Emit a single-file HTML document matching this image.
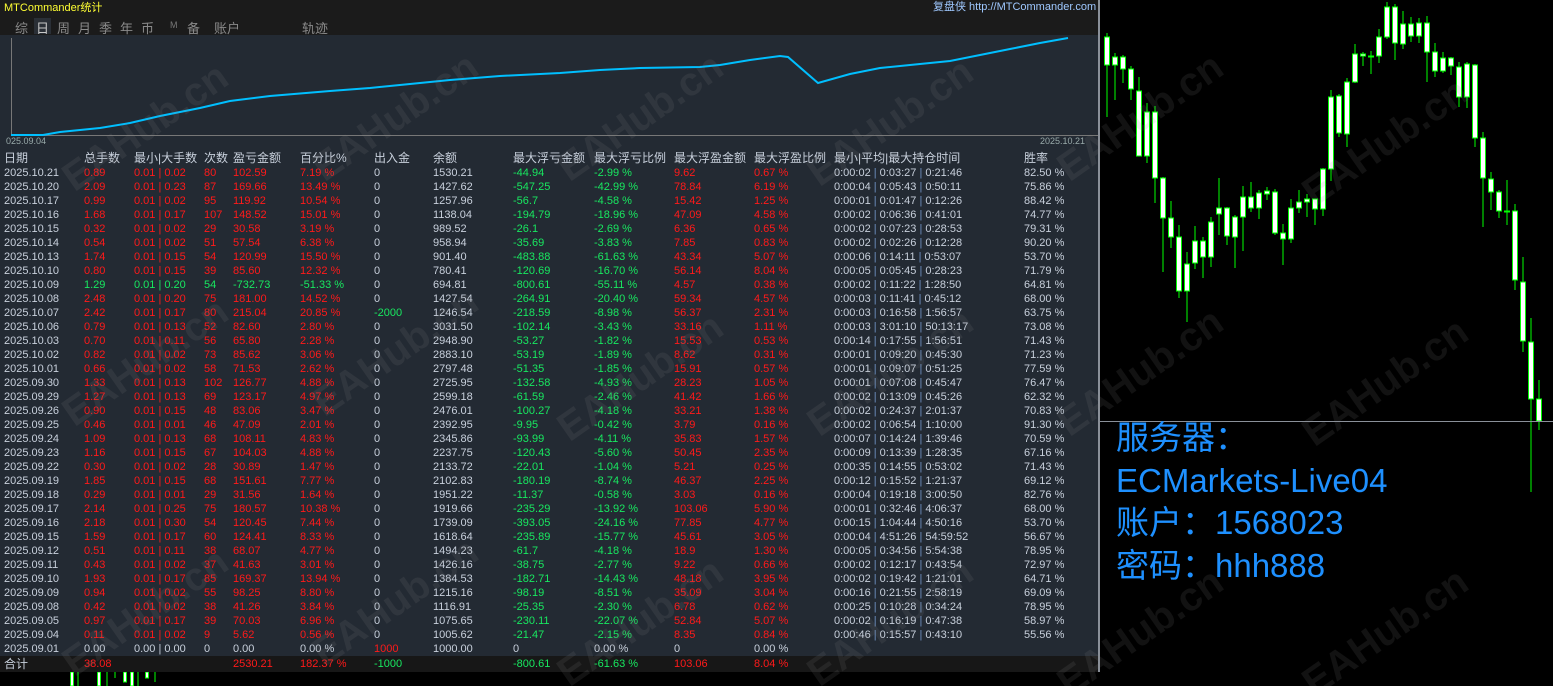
<!DOCTYPE html>
<html style="overflow:hidden;width:1553px;height:686px"><head><meta charset="utf-8"><style>
*{margin:0;padding:0}
body{width:1553px;height:686px;background:#000;position:relative;overflow:hidden;font-family:"Liberation Sans","Noto Sans CJK SC",sans-serif}
#top{position:absolute;left:0;top:0;width:1098px;height:35px;background:#1b1b1b}
#pan{position:absolute;left:0;top:35px;width:1098px;height:621px;background:#232a33}
#tot{position:absolute;left:0;top:656px;width:1098px;height:16px;background:#171717}
#vb{position:absolute;left:1098px;top:0;width:2px;height:672px;background:#8a9099}
.t{position:absolute;font-size:11px;color:#c8d0dc;white-space:nowrap}
.r{position:absolute;left:0;width:1098px;height:14px;font-size:11px;line-height:14px;white-space:nowrap;color:#c8d0dc}
.r span{position:absolute;top:0}
.a{left:4px}.b{left:84px;color:#ff1a1a}.c{left:134px;color:#ff1a1a}.d{left:204px;color:#ff1a1a}.e{left:233px;color:#ff1a1a}.f{left:300px;color:#ff1a1a}.h{left:374px}.i{left:433px}.j{left:513px;color:#18e860}.k{left:594px;color:#18e860}.l{left:674px;color:#ff1a1a}.m{left:754px;color:#ff1a1a}.n{left:834px}.o{left:1024px}
.r .gr{color:#18e860}.r .gy{color:#c8d0dc}
.n i{font-style:normal;color:#6d8fc0}
.wm{position:absolute;font:bold 40px "Liberation Sans",sans-serif;color:rgba(140,140,140,0.13);transform:rotate(-35deg);white-space:nowrap}
#wms{position:absolute;left:0;top:0;width:1553px;height:686px;overflow:hidden}
.bl{position:absolute;left:1116px;font-size:33px;color:#1e90ff;white-space:nowrap;line-height:38px}
</style></head><body>
<div id="top"></div><div id="pan"></div><div id="tot"></div>
<div class="t" style="left:4px;top:-1px;color:#ffff33;font-size:11px">MTCommander统计</div>
<div class="t" style="left:933px;top:-2px;color:#9fc8ff;font-size:11px">复盘侠 http://MTCommander.com</div>
<div style="position:absolute;left:34px;top:18px;width:17px;height:16px;background:#2a2f36"></div>
<div class="t" style="top:18px;font-size:13px;color:#8a8a8a;left:15px">综</div>
<div class="t" style="top:18px;font-size:13px;color:#c8c8c8;left:36px">日</div>
<div class="t" style="top:18px;font-size:13px;color:#8a8a8a;left:57px">周</div>
<div class="t" style="top:18px;font-size:13px;color:#8a8a8a;left:78px">月</div>
<div class="t" style="top:18px;font-size:13px;color:#8a8a8a;left:99px">季</div>
<div class="t" style="top:18px;font-size:13px;color:#8a8a8a;left:120px">年</div>
<div class="t" style="top:18px;font-size:13px;color:#8a8a8a;left:141px">币</div>
<div class="t" style="top:20px;font-size:9px;color:#777;left:170px">M</div>
<div class="t" style="top:18px;font-size:13px;color:#8a8a8a;left:187px">备</div>
<div class="t" style="top:18px;font-size:13px;color:#8a8a8a;left:214px">账户</div>
<div class="t" style="top:18px;font-size:13px;color:#8a8a8a;left:302px">轨迹</div>
<svg style="position:absolute;left:0;top:0" width="1100" height="150">
<line x1="11.5" y1="38" x2="11.5" y2="136" stroke="#777" stroke-width="1"/>
<line x1="11" y1="135.5" x2="1098" y2="135.5" stroke="#777" stroke-width="1"/>
<polyline fill="none" stroke="#00bfff" stroke-width="2" points="11,135 43,135 60,132 100,128 130,123 160,116 200,108 230,101 270,96 330,91 370,88 410,84 450,80 500,76 560,73 600,70 640,68 700,67 720,65 750,60 780,56 788,57 818,83 850,74 880,68 920,64 950,61 980,55 1010,49 1040,43 1068,38"/>
</svg>
<div class="t" style="left:6px;top:136px;font-size:9px;color:#9aa">025.09.04</div>
<div class="t" style="left:1040px;top:136px;font-size:9px;color:#9aa">2025.10.21</div>

<div class="r" style="top:151px;font-size:12px"><span class="a">日期</span><span class="b gy">总手数</span><span class="c gy">最小|大手数</span><span class="d gy">次数</span><span class="e gy">盈亏金额</span><span class="f gy">百分比%</span><span class="h">出入金</span><span class="i">余额</span><span class="j gy">最大浮亏金额</span><span class="k gy">最大浮亏比例</span><span class="l gy">最大浮盈金额</span><span class="m gy">最大浮盈比例</span><span class="n">最小|平均|最大持仓时间</span><span class="o">胜率</span></div>

<div class="r" style="top:166px"><span class="a">2025.10.21</span><span class="b">0.89</span><span class="c">0.01 | 0.02</span><span class="d">80</span><span class="e">102.59</span><span class="f">7.19 %</span><span class="h">0</span><span class="i">1530.21</span><span class="j">-44.94</span><span class="k">-2.99 %</span><span class="l">9.62</span><span class="m">0.67 %</span><span class="n">0:00:02 <i>|</i> 0:03:27 <i>|</i> 0:21:46</span><span class="o">82.50 %</span></div>
<div class="r" style="top:180px"><span class="a">2025.10.20</span><span class="b">2.09</span><span class="c">0.01 | 0.23</span><span class="d">87</span><span class="e">169.66</span><span class="f">13.49 %</span><span class="h">0</span><span class="i">1427.62</span><span class="j">-547.25</span><span class="k">-42.99 %</span><span class="l">78.84</span><span class="m">6.19 %</span><span class="n">0:00:04 <i>|</i> 0:05:43 <i>|</i> 0:50:11</span><span class="o">75.86 %</span></div>
<div class="r" style="top:194px"><span class="a">2025.10.17</span><span class="b">0.99</span><span class="c">0.01 | 0.02</span><span class="d">95</span><span class="e">119.92</span><span class="f">10.54 %</span><span class="h">0</span><span class="i">1257.96</span><span class="j">-56.7</span><span class="k">-4.58 %</span><span class="l">15.42</span><span class="m">1.25 %</span><span class="n">0:00:01 <i>|</i> 0:01:47 <i>|</i> 0:12:26</span><span class="o">88.42 %</span></div>
<div class="r" style="top:208px"><span class="a">2025.10.16</span><span class="b">1.68</span><span class="c">0.01 | 0.17</span><span class="d">107</span><span class="e">148.52</span><span class="f">15.01 %</span><span class="h">0</span><span class="i">1138.04</span><span class="j">-194.79</span><span class="k">-18.96 %</span><span class="l">47.09</span><span class="m">4.58 %</span><span class="n">0:00:02 <i>|</i> 0:06:36 <i>|</i> 0:41:01</span><span class="o">74.77 %</span></div>
<div class="r" style="top:222px"><span class="a">2025.10.15</span><span class="b">0.32</span><span class="c">0.01 | 0.02</span><span class="d">29</span><span class="e">30.58</span><span class="f">3.19 %</span><span class="h">0</span><span class="i">989.52</span><span class="j">-26.1</span><span class="k">-2.69 %</span><span class="l">6.36</span><span class="m">0.65 %</span><span class="n">0:00:02 <i>|</i> 0:07:23 <i>|</i> 0:28:53</span><span class="o">79.31 %</span></div>
<div class="r" style="top:236px"><span class="a">2025.10.14</span><span class="b">0.54</span><span class="c">0.01 | 0.02</span><span class="d">51</span><span class="e">57.54</span><span class="f">6.38 %</span><span class="h">0</span><span class="i">958.94</span><span class="j">-35.69</span><span class="k">-3.83 %</span><span class="l">7.85</span><span class="m">0.83 %</span><span class="n">0:00:02 <i>|</i> 0:02:26 <i>|</i> 0:12:28</span><span class="o">90.20 %</span></div>
<div class="r" style="top:250px"><span class="a">2025.10.13</span><span class="b">1.74</span><span class="c">0.01 | 0.15</span><span class="d">54</span><span class="e">120.99</span><span class="f">15.50 %</span><span class="h">0</span><span class="i">901.40</span><span class="j">-483.88</span><span class="k">-61.63 %</span><span class="l">43.34</span><span class="m">5.07 %</span><span class="n">0:00:06 <i>|</i> 0:14:11 <i>|</i> 0:53:07</span><span class="o">53.70 %</span></div>
<div class="r" style="top:264px"><span class="a">2025.10.10</span><span class="b">0.80</span><span class="c">0.01 | 0.15</span><span class="d">39</span><span class="e">85.60</span><span class="f">12.32 %</span><span class="h">0</span><span class="i">780.41</span><span class="j">-120.69</span><span class="k">-16.70 %</span><span class="l">56.14</span><span class="m">8.04 %</span><span class="n">0:00:05 <i>|</i> 0:05:45 <i>|</i> 0:28:23</span><span class="o">71.79 %</span></div>
<div class="r" style="top:278px"><span class="a">2025.10.09</span><span class="b gr">1.29</span><span class="c gr">0.01 | 0.20</span><span class="d gr">54</span><span class="e gr">-732.73</span><span class="f gr">-51.33 %</span><span class="h">0</span><span class="i">694.81</span><span class="j">-800.61</span><span class="k">-55.11 %</span><span class="l">4.57</span><span class="m">0.38 %</span><span class="n">0:00:02 <i>|</i> 0:11:22 <i>|</i> 1:28:50</span><span class="o">64.81 %</span></div>
<div class="r" style="top:292px"><span class="a">2025.10.08</span><span class="b">2.48</span><span class="c">0.01 | 0.20</span><span class="d">75</span><span class="e">181.00</span><span class="f">14.52 %</span><span class="h">0</span><span class="i">1427.54</span><span class="j">-264.91</span><span class="k">-20.40 %</span><span class="l">59.34</span><span class="m">4.57 %</span><span class="n">0:00:03 <i>|</i> 0:11:41 <i>|</i> 0:45:12</span><span class="o">68.00 %</span></div>
<div class="r" style="top:306px"><span class="a">2025.10.07</span><span class="b">2.42</span><span class="c">0.01 | 0.17</span><span class="d">80</span><span class="e">215.04</span><span class="f">20.85 %</span><span class="h gr">-2000</span><span class="i">1246.54</span><span class="j">-218.59</span><span class="k">-8.98 %</span><span class="l">56.37</span><span class="m">2.31 %</span><span class="n">0:00:03 <i>|</i> 0:16:58 <i>|</i> 1:56:57</span><span class="o">63.75 %</span></div>
<div class="r" style="top:320px"><span class="a">2025.10.06</span><span class="b">0.79</span><span class="c">0.01 | 0.13</span><span class="d">52</span><span class="e">82.60</span><span class="f">2.80 %</span><span class="h">0</span><span class="i">3031.50</span><span class="j">-102.14</span><span class="k">-3.43 %</span><span class="l">33.16</span><span class="m">1.11 %</span><span class="n">0:00:03 <i>|</i> 3:01:10 <i>|</i> 50:13:17</span><span class="o">73.08 %</span></div>
<div class="r" style="top:334px"><span class="a">2025.10.03</span><span class="b">0.70</span><span class="c">0.01 | 0.11</span><span class="d">56</span><span class="e">65.80</span><span class="f">2.28 %</span><span class="h">0</span><span class="i">2948.90</span><span class="j">-53.27</span><span class="k">-1.82 %</span><span class="l">15.53</span><span class="m">0.53 %</span><span class="n">0:00:14 <i>|</i> 0:17:55 <i>|</i> 1:56:51</span><span class="o">71.43 %</span></div>
<div class="r" style="top:348px"><span class="a">2025.10.02</span><span class="b">0.82</span><span class="c">0.01 | 0.02</span><span class="d">73</span><span class="e">85.62</span><span class="f">3.06 %</span><span class="h">0</span><span class="i">2883.10</span><span class="j">-53.19</span><span class="k">-1.89 %</span><span class="l">8.62</span><span class="m">0.31 %</span><span class="n">0:00:01 <i>|</i> 0:09:20 <i>|</i> 0:45:30</span><span class="o">71.23 %</span></div>
<div class="r" style="top:362px"><span class="a">2025.10.01</span><span class="b">0.66</span><span class="c">0.01 | 0.02</span><span class="d">58</span><span class="e">71.53</span><span class="f">2.62 %</span><span class="h">0</span><span class="i">2797.48</span><span class="j">-51.35</span><span class="k">-1.85 %</span><span class="l">15.91</span><span class="m">0.57 %</span><span class="n">0:00:01 <i>|</i> 0:09:07 <i>|</i> 0:51:25</span><span class="o">77.59 %</span></div>
<div class="r" style="top:376px"><span class="a">2025.09.30</span><span class="b">1.33</span><span class="c">0.01 | 0.13</span><span class="d">102</span><span class="e">126.77</span><span class="f">4.88 %</span><span class="h">0</span><span class="i">2725.95</span><span class="j">-132.58</span><span class="k">-4.93 %</span><span class="l">28.23</span><span class="m">1.05 %</span><span class="n">0:00:01 <i>|</i> 0:07:08 <i>|</i> 0:45:47</span><span class="o">76.47 %</span></div>
<div class="r" style="top:390px"><span class="a">2025.09.29</span><span class="b">1.27</span><span class="c">0.01 | 0.13</span><span class="d">69</span><span class="e">123.17</span><span class="f">4.97 %</span><span class="h">0</span><span class="i">2599.18</span><span class="j">-61.59</span><span class="k">-2.46 %</span><span class="l">41.42</span><span class="m">1.66 %</span><span class="n">0:00:02 <i>|</i> 0:13:09 <i>|</i> 0:45:26</span><span class="o">62.32 %</span></div>
<div class="r" style="top:404px"><span class="a">2025.09.26</span><span class="b">0.90</span><span class="c">0.01 | 0.15</span><span class="d">48</span><span class="e">83.06</span><span class="f">3.47 %</span><span class="h">0</span><span class="i">2476.01</span><span class="j">-100.27</span><span class="k">-4.18 %</span><span class="l">33.21</span><span class="m">1.38 %</span><span class="n">0:00:02 <i>|</i> 0:24:37 <i>|</i> 2:01:37</span><span class="o">70.83 %</span></div>
<div class="r" style="top:418px"><span class="a">2025.09.25</span><span class="b">0.46</span><span class="c">0.01 | 0.01</span><span class="d">46</span><span class="e">47.09</span><span class="f">2.01 %</span><span class="h">0</span><span class="i">2392.95</span><span class="j">-9.95</span><span class="k">-0.42 %</span><span class="l">3.79</span><span class="m">0.16 %</span><span class="n">0:00:02 <i>|</i> 0:06:54 <i>|</i> 1:10:00</span><span class="o">91.30 %</span></div>
<div class="r" style="top:432px"><span class="a">2025.09.24</span><span class="b">1.09</span><span class="c">0.01 | 0.13</span><span class="d">68</span><span class="e">108.11</span><span class="f">4.83 %</span><span class="h">0</span><span class="i">2345.86</span><span class="j">-93.99</span><span class="k">-4.11 %</span><span class="l">35.83</span><span class="m">1.57 %</span><span class="n">0:00:07 <i>|</i> 0:14:24 <i>|</i> 1:39:46</span><span class="o">70.59 %</span></div>
<div class="r" style="top:446px"><span class="a">2025.09.23</span><span class="b">1.16</span><span class="c">0.01 | 0.15</span><span class="d">67</span><span class="e">104.03</span><span class="f">4.88 %</span><span class="h">0</span><span class="i">2237.75</span><span class="j">-120.43</span><span class="k">-5.60 %</span><span class="l">50.45</span><span class="m">2.35 %</span><span class="n">0:00:09 <i>|</i> 0:13:39 <i>|</i> 1:28:35</span><span class="o">67.16 %</span></div>
<div class="r" style="top:460px"><span class="a">2025.09.22</span><span class="b">0.30</span><span class="c">0.01 | 0.02</span><span class="d">28</span><span class="e">30.89</span><span class="f">1.47 %</span><span class="h">0</span><span class="i">2133.72</span><span class="j">-22.01</span><span class="k">-1.04 %</span><span class="l">5.21</span><span class="m">0.25 %</span><span class="n">0:00:35 <i>|</i> 0:14:55 <i>|</i> 0:53:02</span><span class="o">71.43 %</span></div>
<div class="r" style="top:474px"><span class="a">2025.09.19</span><span class="b">1.85</span><span class="c">0.01 | 0.15</span><span class="d">68</span><span class="e">151.61</span><span class="f">7.77 %</span><span class="h">0</span><span class="i">2102.83</span><span class="j">-180.19</span><span class="k">-8.74 %</span><span class="l">46.37</span><span class="m">2.25 %</span><span class="n">0:00:12 <i>|</i> 0:15:52 <i>|</i> 1:21:37</span><span class="o">69.12 %</span></div>
<div class="r" style="top:488px"><span class="a">2025.09.18</span><span class="b">0.29</span><span class="c">0.01 | 0.01</span><span class="d">29</span><span class="e">31.56</span><span class="f">1.64 %</span><span class="h">0</span><span class="i">1951.22</span><span class="j">-11.37</span><span class="k">-0.58 %</span><span class="l">3.03</span><span class="m">0.16 %</span><span class="n">0:00:04 <i>|</i> 0:19:18 <i>|</i> 3:00:50</span><span class="o">82.76 %</span></div>
<div class="r" style="top:502px"><span class="a">2025.09.17</span><span class="b">2.14</span><span class="c">0.01 | 0.25</span><span class="d">75</span><span class="e">180.57</span><span class="f">10.38 %</span><span class="h">0</span><span class="i">1919.66</span><span class="j">-235.29</span><span class="k">-13.92 %</span><span class="l">103.06</span><span class="m">5.90 %</span><span class="n">0:00:01 <i>|</i> 0:32:46 <i>|</i> 4:06:37</span><span class="o">68.00 %</span></div>
<div class="r" style="top:516px"><span class="a">2025.09.16</span><span class="b">2.18</span><span class="c">0.01 | 0.30</span><span class="d">54</span><span class="e">120.45</span><span class="f">7.44 %</span><span class="h">0</span><span class="i">1739.09</span><span class="j">-393.05</span><span class="k">-24.16 %</span><span class="l">77.85</span><span class="m">4.77 %</span><span class="n">0:00:15 <i>|</i> 1:04:44 <i>|</i> 4:50:16</span><span class="o">53.70 %</span></div>
<div class="r" style="top:530px"><span class="a">2025.09.15</span><span class="b">1.59</span><span class="c">0.01 | 0.17</span><span class="d">60</span><span class="e">124.41</span><span class="f">8.33 %</span><span class="h">0</span><span class="i">1618.64</span><span class="j">-235.89</span><span class="k">-15.77 %</span><span class="l">45.61</span><span class="m">3.05 %</span><span class="n">0:00:04 <i>|</i> 4:51:26 <i>|</i> 54:59:52</span><span class="o">56.67 %</span></div>
<div class="r" style="top:544px"><span class="a">2025.09.12</span><span class="b">0.51</span><span class="c">0.01 | 0.11</span><span class="d">38</span><span class="e">68.07</span><span class="f">4.77 %</span><span class="h">0</span><span class="i">1494.23</span><span class="j">-61.7</span><span class="k">-4.18 %</span><span class="l">18.9</span><span class="m">1.30 %</span><span class="n">0:00:05 <i>|</i> 0:34:56 <i>|</i> 5:54:38</span><span class="o">78.95 %</span></div>
<div class="r" style="top:558px"><span class="a">2025.09.11</span><span class="b">0.43</span><span class="c">0.01 | 0.02</span><span class="d">37</span><span class="e">41.63</span><span class="f">3.01 %</span><span class="h">0</span><span class="i">1426.16</span><span class="j">-38.75</span><span class="k">-2.77 %</span><span class="l">9.22</span><span class="m">0.66 %</span><span class="n">0:00:02 <i>|</i> 0:12:17 <i>|</i> 0:43:54</span><span class="o">72.97 %</span></div>
<div class="r" style="top:572px"><span class="a">2025.09.10</span><span class="b">1.93</span><span class="c">0.01 | 0.17</span><span class="d">85</span><span class="e">169.37</span><span class="f">13.94 %</span><span class="h">0</span><span class="i">1384.53</span><span class="j">-182.71</span><span class="k">-14.43 %</span><span class="l">48.18</span><span class="m">3.95 %</span><span class="n">0:00:02 <i>|</i> 0:19:42 <i>|</i> 1:21:01</span><span class="o">64.71 %</span></div>
<div class="r" style="top:586px"><span class="a">2025.09.09</span><span class="b">0.94</span><span class="c">0.01 | 0.02</span><span class="d">55</span><span class="e">98.25</span><span class="f">8.80 %</span><span class="h">0</span><span class="i">1215.16</span><span class="j">-98.19</span><span class="k">-8.51 %</span><span class="l">35.09</span><span class="m">3.04 %</span><span class="n">0:00:16 <i>|</i> 0:21:55 <i>|</i> 2:58:19</span><span class="o">69.09 %</span></div>
<div class="r" style="top:600px"><span class="a">2025.09.08</span><span class="b">0.42</span><span class="c">0.01 | 0.02</span><span class="d">38</span><span class="e">41.26</span><span class="f">3.84 %</span><span class="h">0</span><span class="i">1116.91</span><span class="j">-25.35</span><span class="k">-2.30 %</span><span class="l">6.78</span><span class="m">0.62 %</span><span class="n">0:00:25 <i>|</i> 0:10:28 <i>|</i> 0:34:24</span><span class="o">78.95 %</span></div>
<div class="r" style="top:614px"><span class="a">2025.09.05</span><span class="b">0.97</span><span class="c">0.01 | 0.17</span><span class="d">39</span><span class="e">70.03</span><span class="f">6.96 %</span><span class="h">0</span><span class="i">1075.65</span><span class="j">-230.11</span><span class="k">-22.07 %</span><span class="l">52.84</span><span class="m">5.07 %</span><span class="n">0:00:02 <i>|</i> 0:16:19 <i>|</i> 0:47:38</span><span class="o">58.97 %</span></div>
<div class="r" style="top:628px"><span class="a">2025.09.04</span><span class="b">0.11</span><span class="c">0.01 | 0.02</span><span class="d">9</span><span class="e">5.62</span><span class="f">0.56 %</span><span class="h">0</span><span class="i">1005.62</span><span class="j">-21.47</span><span class="k">-2.15 %</span><span class="l">8.35</span><span class="m">0.84 %</span><span class="n">0:00:46 <i>|</i> 0:15:57 <i>|</i> 0:43:10</span><span class="o">55.56 %</span></div>
<div class="r" style="top:642px"><span class="a">2025.09.01</span><span class="b gy">0.00</span><span class="c gy">0.00 | 0.00</span><span class="d gy">0</span><span class="e gy">0.00</span><span class="f gy">0.00 %</span><span class="h" style="color:#ff1a1a">1000</span><span class="i">1000.00</span><span class="j gy">0</span><span class="k gy">0.00 %</span><span class="l gy">0</span><span class="m gy">0.00 %</span></div>
<div class="r" style="top:657px"><span class="a" style="font-size:12px">合计</span><span class="b">38.08</span><span class="e">2530.21</span><span class="f">182.37 %</span><span class="h gr">-1000</span><span class="j">-800.61</span><span class="k">-61.63 %</span><span class="l">103.06</span><span class="m">8.04 %</span></div>

<div id="vb"></div>
<svg style="position:absolute;left:1100px;top:0" width="453" height="686">
<g stroke="#00ff00" stroke-width="1" fill="#fff">
<line x1="7" y1="33" x2="7" y2="117"/><rect x="4.5" y="37" width="5" height="28"/>
<line x1="15" y1="53" x2="15" y2="100"/><rect x="12.5" y="57" width="5" height="8"/>
<line x1="23" y1="55" x2="23" y2="83"/><rect x="20.5" y="57" width="5" height="12"/>
<line x1="31" y1="66" x2="31" y2="100"/><rect x="28.5" y="69" width="5" height="20"/>
<line x1="39" y1="77" x2="39" y2="156"/><rect x="36.5" y="91" width="5" height="65"/>
<line x1="47" y1="103" x2="47" y2="163"/><rect x="44.5" y="112" width="5" height="44"/>
<line x1="55" y1="106" x2="55" y2="203"/><rect x="52.5" y="112" width="5" height="66"/>
<line x1="63" y1="177" x2="63" y2="272"/><rect x="60.5" y="178" width="5" height="40"/>
<line x1="71" y1="201" x2="71" y2="248"/><rect x="68.5" y="218" width="5" height="19"/>
<line x1="79" y1="225" x2="79" y2="298"/><rect x="76.5" y="237" width="5" height="54"/>
<line x1="87" y1="252" x2="87" y2="322"/><rect x="84.5" y="264" width="5" height="27"/>
<line x1="95" y1="226" x2="95" y2="269"/><rect x="92.5" y="241" width="5" height="22"/>
<line x1="103" y1="237" x2="103" y2="278"/><rect x="100.5" y="241" width="5" height="16"/>
<line x1="111" y1="217" x2="111" y2="267"/><rect x="108.5" y="222" width="5" height="35"/>
<line x1="119" y1="178" x2="119" y2="235"/><rect x="116.5" y="208" width="5" height="6"/>
<line x1="127" y1="207" x2="127" y2="245"/><rect x="124.5" y="208" width="5" height="28"/>
<line x1="135" y1="215" x2="135" y2="268"/><rect x="132.5" y="217" width="5" height="20"/>
<line x1="143" y1="186" x2="143" y2="251"/><rect x="140.5" y="197" width="5" height="20"/>
<line x1="151" y1="182" x2="151" y2="212"/><rect x="148.5" y="197" width="5" height="11"/>
<line x1="159" y1="190" x2="159" y2="219"/><rect x="156.5" y="193" width="5" height="15"/>
<line x1="167" y1="187" x2="167" y2="200"/><rect x="164.5" y="191" width="5" height="3"/>
<line x1="175" y1="189" x2="175" y2="235"/><rect x="172.5" y="192" width="5" height="41"/>
<line x1="183" y1="224" x2="183" y2="265"/><rect x="180.5" y="233" width="5" height="6"/>
<line x1="191" y1="199" x2="191" y2="243"/><rect x="188.5" y="208" width="5" height="31"/>
<line x1="199" y1="190" x2="199" y2="213"/><rect x="196.5" y="202" width="5" height="6"/>
<line x1="207" y1="194" x2="207" y2="217"/><rect x="204.5" y="199" width="5" height="3"/>
<line x1="215" y1="199" x2="215" y2="225"/><rect x="212.5" y="199" width="5" height="10"/>
<line x1="223" y1="168" x2="223" y2="216"/><rect x="220.5" y="169" width="5" height="40"/>
<line x1="231" y1="90" x2="231" y2="181"/><rect x="228.5" y="97" width="5" height="72"/>
<line x1="239" y1="94" x2="239" y2="137"/><rect x="236.5" y="96" width="5" height="37"/>
<line x1="247" y1="78" x2="247" y2="147"/><rect x="244.5" y="82" width="5" height="52"/>
<line x1="255" y1="44" x2="255" y2="83"/><rect x="252.5" y="54" width="5" height="28"/>
<line x1="263" y1="52" x2="263" y2="66"/><rect x="260.5" y="54" width="5" height="2"/>
<line x1="271" y1="51" x2="271" y2="74"/><rect x="268.5" y="56" width="5" height="1"/>
<line x1="279" y1="29" x2="279" y2="63"/><rect x="276.5" y="37" width="5" height="19"/>
<line x1="287" y1="2" x2="287" y2="39"/><rect x="284.5" y="7" width="5" height="30"/>
<line x1="295" y1="4" x2="295" y2="60"/><rect x="292.5" y="7" width="5" height="36"/>
<line x1="303" y1="11" x2="303" y2="49"/><rect x="300.5" y="24" width="5" height="20"/>
<line x1="311" y1="17" x2="311" y2="42"/><rect x="308.5" y="24" width="5" height="12"/>
<line x1="319" y1="18" x2="319" y2="43"/><rect x="316.5" y="23" width="5" height="13"/>
<line x1="327" y1="16" x2="327" y2="82"/><rect x="324.5" y="23" width="5" height="29"/>
<line x1="335" y1="43" x2="335" y2="77"/><rect x="332.5" y="52" width="5" height="19"/>
<line x1="343" y1="52" x2="343" y2="73"/><rect x="340.5" y="58" width="5" height="13"/>
<line x1="351" y1="57" x2="351" y2="75"/><rect x="348.5" y="58" width="5" height="8"/>
<line x1="359" y1="62" x2="359" y2="107"/><rect x="356.5" y="67" width="5" height="30"/>
<line x1="367" y1="62" x2="367" y2="108"/><rect x="364.5" y="64" width="5" height="33"/>
<line x1="375" y1="64" x2="375" y2="147"/><rect x="372.5" y="65" width="5" height="73"/>
<line x1="383" y1="132" x2="383" y2="227"/><rect x="380.5" y="138" width="5" height="40"/>
<line x1="391" y1="172" x2="391" y2="210"/><rect x="388.5" y="179" width="5" height="13"/>
<line x1="399" y1="190" x2="399" y2="218"/><rect x="396.5" y="192" width="5" height="19"/>
<line x1="407" y1="180" x2="407" y2="225"/><rect x="404.5" y="211" width="5" height="1"/>
<line x1="415" y1="204" x2="415" y2="290"/><rect x="412.5" y="211" width="5" height="69"/>
<line x1="423" y1="257" x2="423" y2="352"/><rect x="420.5" y="282" width="5" height="59"/>
<line x1="431" y1="318" x2="431" y2="492"/><rect x="428.5" y="342" width="5" height="57"/>
<line x1="439" y1="380" x2="439" y2="430"/><rect x="436.5" y="399" width="5" height="22"/>
</g>
<line x1="0" y1="421.5" x2="453" y2="421.5" stroke="#8a9099" stroke-width="1"/>
</svg>
<svg style="position:absolute;left:60px;top:672px" width="140" height="14"><g stroke="#00ff00" fill="#fff"><rect x="10.5" y="0" width="3" height="14"/><line x1="18" y1="0" x2="18" y2="14"/><rect x="37.5" y="0" width="3" height="14"/><line x1="47" y1="0" x2="47" y2="14"/><line x1="55" y1="0" x2="55" y2="6"/><rect x="63.5" y="0" width="3" height="10"/><rect x="70.5" y="0" width="3" height="14"/><line x1="78" y1="0" x2="78" y2="14"/><rect x="85.5" y="0" width="3" height="6"/><line x1="95" y1="0" x2="95" y2="10"/></g></svg>

<div class="bl" style="top:419px">服务器：</div>
<div class="bl" style="top:462px">ECMarkets-Live04</div>
<div class="bl" style="top:504px">账户：1568023</div>
<div class="bl" style="top:547px">密码：hhh888</div>

<div id="wms">
<div class="wm" style="left:50px;top:105px">EAHub.cn</div>
<div class="wm" style="left:300px;top:95px">EAHub.cn</div>
<div class="wm" style="left:545px;top:95px">EAHub.cn</div>
<div class="wm" style="left:795px;top:100px">EAHub.cn</div>
<div class="wm" style="left:1045px;top:95px">EAHub.cn</div>
<div class="wm" style="left:1290px;top:120px">EAHub.cn</div>
<div class="wm" style="left:50px;top:340px">EAHub.cn</div>
<div class="wm" style="left:300px;top:330px">EAHub.cn</div>
<div class="wm" style="left:545px;top:355px">EAHub.cn</div>
<div class="wm" style="left:795px;top:350px">EAHub.cn</div>
<div class="wm" style="left:1045px;top:350px">EAHub.cn</div>
<div class="wm" style="left:1290px;top:360px">EAHub.cn</div>
<div class="wm" style="left:50px;top:590px">EAHub.cn</div>
<div class="wm" style="left:300px;top:580px">EAHub.cn</div>
<div class="wm" style="left:545px;top:600px">EAHub.cn</div>
<div class="wm" style="left:795px;top:600px">EAHub.cn</div>
<div class="wm" style="left:1045px;top:610px">EAHub.cn</div>
<div class="wm" style="left:1290px;top:610px">EAHub.cn</div>
</div>
</body></html>
